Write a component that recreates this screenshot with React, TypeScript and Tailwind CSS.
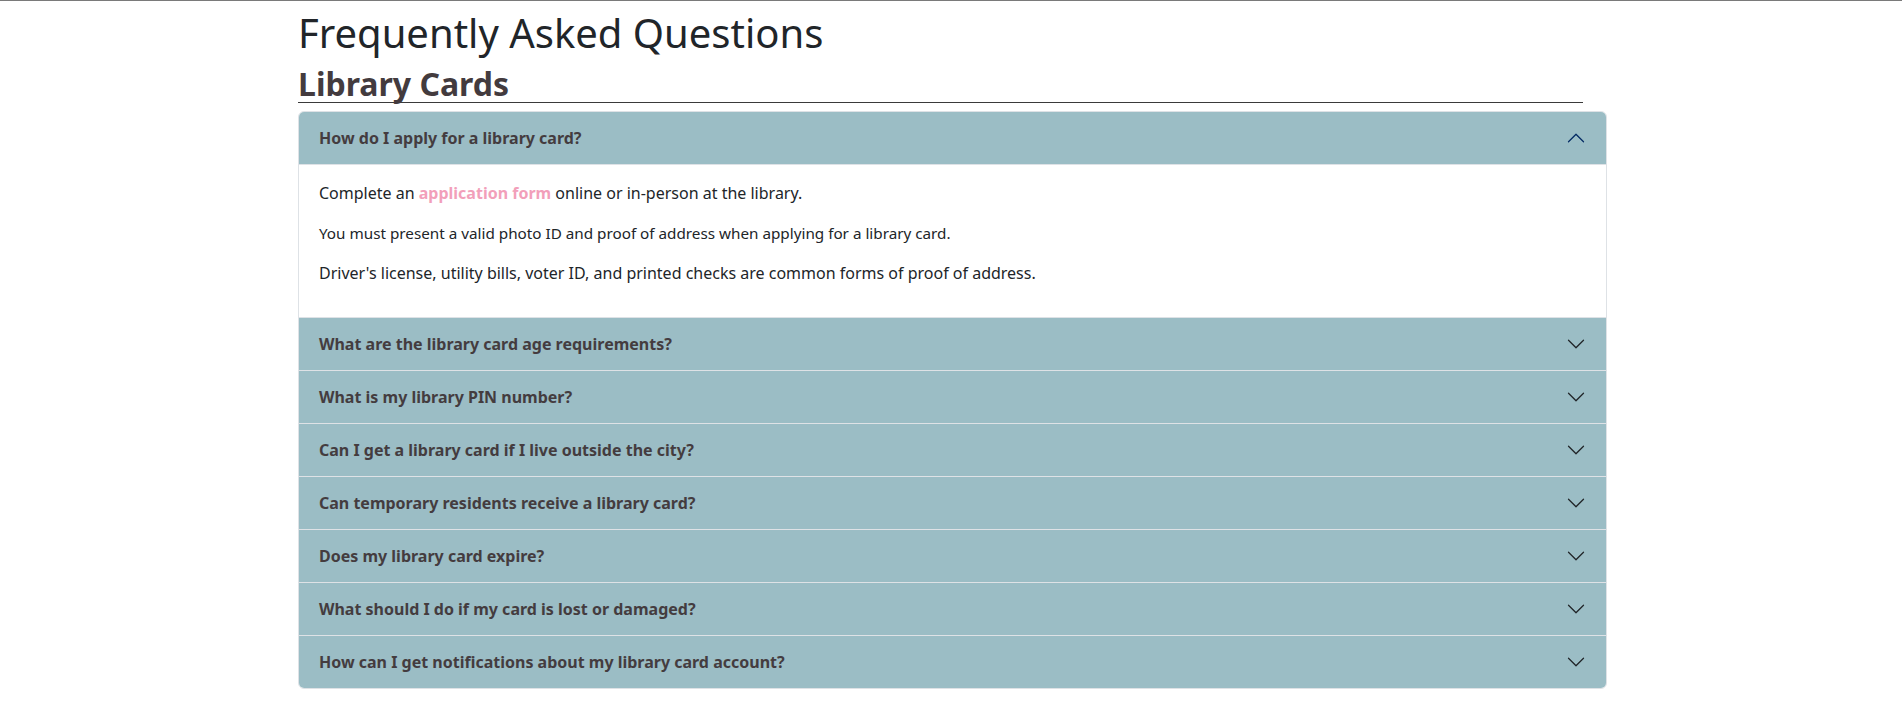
import { useState } from "react";

const questions: { q: string; a?: React.ReactNode }[] = [
  {
    q: "How do I apply for a library card?",
    a: (
      <>
        <p className="mb-4 text-[16px]">
          Complete an{" "}
          <a href="#" className="font-bold text-[#f29fba]">
            application form
          </a>{" "}
          online or in-person at the library.
        </p>
        <p className="mb-4 text-[15.25px]">
          You must present a valid photo ID and proof of address when applying for a library card.
        </p>
        <p className="mb-4 text-[16px]">
          Driver's license, utility bills, voter ID, and printed checks are common forms of proof of
          address.
        </p>
      </>
    ),
  },
  { q: "What are the library card age requirements?" },
  { q: "What is my library PIN number?" },
  { q: "Can I get a library card if I live outside the city?" },
  { q: "Can temporary residents receive a library card?" },
  { q: "Does my library card expire?" },
  { q: "What should I do if my card is lost or damaged?" },
  { q: "How can I get notifications about my library card account?" },
];

const Chevron = ({ open }: { open: boolean }) => (
  <svg
    viewBox="0 0 16 16"
    className={`h-5 w-5 shrink-0 ${open ? "rotate-180 text-[#052c65]" : "text-[#212529]"}`}
    fill="currentColor"
  >
    <path
      fillRule="evenodd"
      d="M1.646 4.646a.5.5 0 0 1 .708 0L8 10.293l5.646-5.647a.5.5 0 0 1 .708.708l-6 6a.5.5 0 0 1-.708 0l-6-6a.5.5 0 0 1 0-.708z"
    />
  </svg>
);

export default function App() {
  const [open, setOpen] = useState(0);

  return (
    <div
      className="min-h-[714px] border-t border-[#7a7a7a] bg-white"
      style={{ fontFamily: '"Noto Sans", "Open Sans", sans-serif' }}
    >
      <div className="ml-[298px] w-[1309px] pb-6">
        <h1 className="mt-[8px] mb-[8px] text-[40px] leading-[1.2] font-normal text-[#212529]">
          Frequently Asked Questions
        </h1>
        <h2 className="mr-[24px] border-b border-[#3a3a3a] text-[32px] leading-[1.16] font-bold text-[#433b3e]">
          Library Cards
        </h2>
        <div className="mt-[8px] overflow-hidden rounded-md border border-[#dee2e6]">
          {questions.map((item, i) => (
            <div key={item.q} className={i > 0 ? "border-t border-[#dee2e6]" : ""}>
              <button
                type="button"
                onClick={() => setOpen(open === i ? -1 : i)}
                className="flex h-[52px] w-full items-center justify-between bg-[#9bbdc5] px-5 text-left text-[16px] font-bold text-[#443c3f]"
              >
                <span>{item.q}</span>
                <Chevron open={open === i} />
              </button>
              {open === i && item.a && (
                <div className="border-t border-[#dee2e6] bg-white px-5 pt-4 pb-4 leading-6 text-[#212529]">
                  {item.a}
                </div>
              )}
            </div>
          ))}
        </div>
      </div>
    </div>
  );
}
